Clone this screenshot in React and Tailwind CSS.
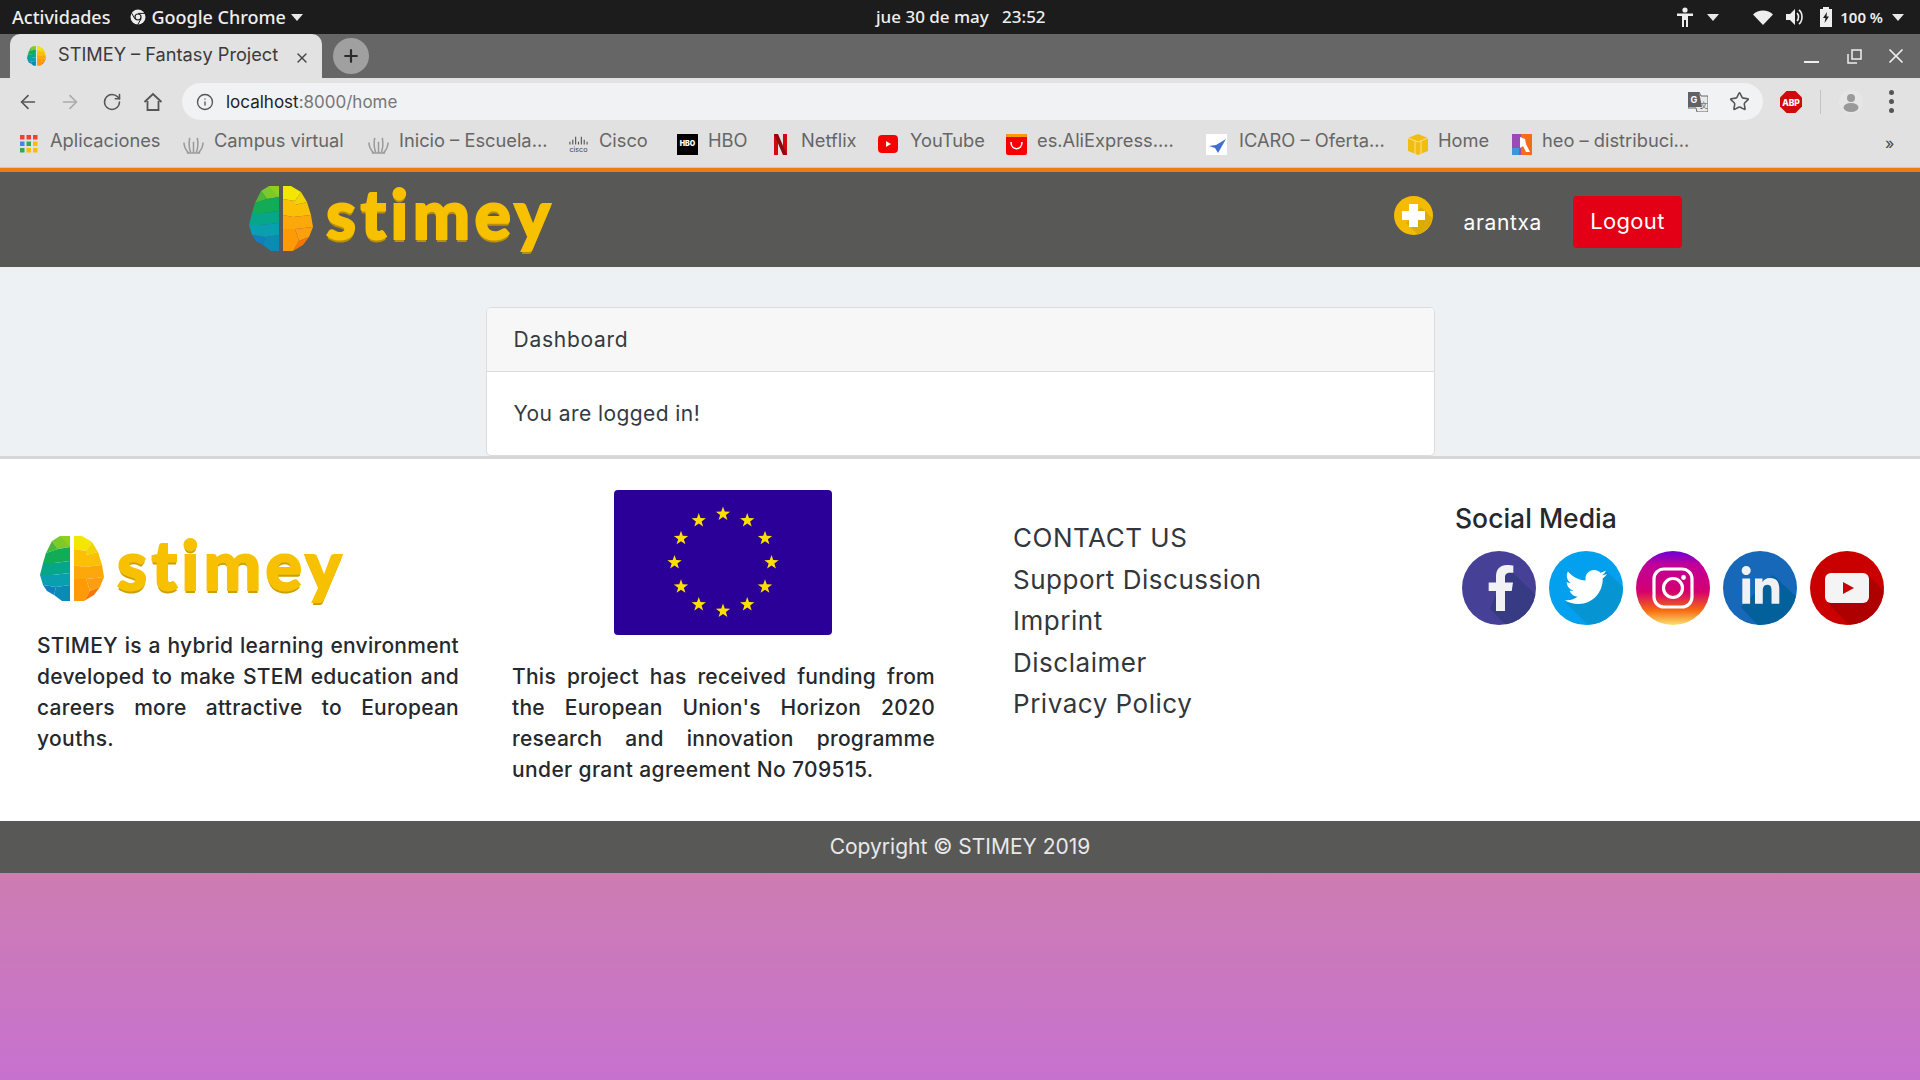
import { ArrowLeft, ArrowRight, RotateCw, Star, X, Plus, Info } from "lucide-react";
import { FaFacebookF, FaTwitter, FaLinkedinIn } from "react-icons/fa";

// low poly brain logo, used in the header and the footer
const Brain = ({ className }) => (
  <svg viewBox="0 0 64 67" className={className}>
    <polygon points="12,6 20,1 30,1 30,12 18,14" fill="#7cc92a" />
    <polygon points="20,1 30,1 30,12" fill="#8fd01a" />
    <polygon points="12,6 18,14 6,18" fill="#4cb83a" />
    <polygon points="6,18 18,14 30,12 30,26 14,28 3,28" fill="#12ac57" />
    <polygon points="3,28 14,28 30,26 30,38 12,40 0,40" fill="#07a58a" />
    <polygon points="0,40 12,40 30,38 30,50 16,52 3,50" fill="#0a9fb0" />
    <polygon points="3,50 16,52 14,60 7,56" fill="#0f80bf" />
    <polygon points="16,52 30,50 30,66 22,66 14,60" fill="#0a8ab5" />
    <polygon points="34,1 42,1 52,7 46,16 34,14" fill="#f5e600" />
    <polygon points="52,7 58,17 46,20 46,16" fill="#f2d500" />
    <polygon points="34,14 46,16 46,20 58,17 62,30 44,32 34,30" fill="#fbbf06" />
    <polygon points="34,30 44,32 62,30 64,42 46,44 34,44" fill="#fca70a" />
    <polygon points="34,44 46,44 50,56 44,66 34,66" fill="#fd9a05" />
    <polygon points="46,44 64,42 60,52 50,56" fill="#fb9f10" />
    <polygon points="50,56 60,52 54,60 44,66" fill="#f97606" />
  </svg>
);

const Logo = ({ text }) => (
  <div className="flex items-center">
    <Brain className="w-[64px] h-[67px]" />
    <span className={text}>stimey</span>
  </div>
);

const Favicon = {
  apps: (
    <svg viewBox="0 0 18 18" className="w-[18px] h-[18px]">
      {["#ea4335", "#ea4335", "#ea4335", "#4285f4", "#34a853", "#fbbc04", "#34a853", "#fbbc04", "#fbbc04"].map((c, i) => (
        <rect key={i} x={(i % 3) * 6.5} y={Math.floor(i / 3) * 6.5} width="4.5" height="4.5" fill={c} />
      ))}
    </svg>
  ),
  wings: (
    <svg viewBox="0 0 22 22" className="w-[21px] h-[21px]" fill="none" stroke="#9a9a9a" strokeWidth="1.6">
      <path d="M11 20V8M8 19C6 14 6 10 7 4M14 19c2-5 2-9 1-15M6 20C3 17 1 14 1 9M16 20c3-3 5-6 5-11M4 20h14" />
    </svg>
  ),
  cisco: (
    <svg viewBox="0 0 22 22" className="w-[21px] h-[21px]">
      <path d="M2 8v3M5 6v5M8 3v8M11 8v3M14 3v8M17 6v5M20 8v3" stroke="#555" strokeWidth="1.2" />
      <text x="11" y="19" textAnchor="middle" fontSize="7.5" fontFamily="Inter, sans-serif" fill="#444">cisco</text>
    </svg>
  ),
  hbo: (
    <div className="w-[21px] h-[21px] bg-black flex items-center justify-center text-white text-[7px] font-black font-['Inter',sans-serif]">HBO</div>
  ),
  netflix: (
    <svg viewBox="0 0 13 21" className="w-[13px] h-[21px]">
      <path d="M0 0h4v21H0zM9 0h4v21H9z" fill="#d00a12" />
      <path d="M0 0h4l9 21H9z" fill="#8f0a0f" />
    </svg>
  ),
  youtube: (
    <svg viewBox="0 0 20 18" className="w-[20px] h-[18px]">
      <rect width="20" height="18" rx="4" fill="#f70000" />
      <path d="M8 6l5 3-5 3z" fill="#fff" />
    </svg>
  ),
  ali: (
    <svg viewBox="0 0 21 21" className="w-[21px] h-[21px]">
      <rect width="21" height="21" rx="2" fill="#f70000" />
      <path d="M0 2a2 2 0 0 1 2-2h17a2 2 0 0 1 2 2v1H0z" fill="#ff9a00" />
      <path d="M5 8c0 9 11 9 11 0" fill="none" stroke="#fff" strokeWidth="1.6" />
    </svg>
  ),
  icaro: (
    <svg viewBox="0 0 21 21" className="w-[21px] h-[21px]">
      <rect width="21" height="21" fill="#fff" />
      <path d="M20 5L12 19l-3-5-6-2 7-1z" fill="#3f6fd1" />
    </svg>
  ),
  home: (
    <svg viewBox="0 0 20 21" className="w-[20px] h-[21px]">
      <path d="M10 0l10 4v13l-10 4L0 17V4z" fill="#f2bd12" />
      <path d="M0 4l10 4 10-4M7 7v13M13 7v13" fill="none" stroke="#fce08a" strokeWidth="1" />
    </svg>
  ),
  heo: (
    <svg viewBox="0 0 20 21" className="w-[20px] h-[21px]">
      <rect width="20" height="21" fill="#f56b1d" />
      <path d="M0 0h9v21H0z" fill="#9a4bb5" />
      <path d="M0 14h7v7H0z" fill="#3c97d8" />
      <path d="M8 3l5 2 1 5 4 8h-4l-3-6-3 2z" fill="#fff" />
    </svg>
  ),
};

const bookmarks = [
  { icon: "apps", label: "Aplicaciones", cls: "w-[163px] gap-3" },
  { icon: "wings", label: "Campus virtual", cls: "w-[185px] gap-2.5" },
  { icon: "wings", label: "Inicio – Escuela...", cls: "w-[200px] gap-2.5" },
  { icon: "cisco", label: "Cisco", cls: "w-[109px] gap-2.5" },
  { icon: "hbo", label: "HBO", cls: "w-[97px] gap-2.5" },
  { icon: "netflix", label: "Netflix", cls: "w-[104px] gap-3.5" },
  { icon: "youtube", label: "YouTube", cls: "w-[128px] gap-3" },
  { icon: "ali", label: "es.AliExpress....", cls: "w-[200px] gap-2.5" },
  { icon: "icaro", label: "ICARO – Oferta...", cls: "w-[202px] gap-3" },
  { icon: "home", label: "Home", cls: "w-[104px] gap-2.5" },
  { icon: "heo", label: "heo – distribuci...", cls: "w-[200px] gap-2.5" },
];

const Caret = ({ className }) => (
  <svg viewBox="0 0 12 7" className={`w-[12px] h-[7px] ${className || ""}`}>
    <path d="M0 0h12L6 7z" fill="#e8e8e8" />
  </svg>
);

const TopBar = () => (
  <div className="h-[34px] bg-[#1c1c1c] flex items-center text-[#eeeeee] text-[18px] font-medium font-['Noto_Sans',sans-serif] relative">
    <span className="ml-[12px]">Actividades</span>
    <svg viewBox="0 0 16 16" className="w-[16px] h-[16px] ml-[20px]">
      <circle cx="8" cy="8" r="7.5" fill="#eee" />
      <circle cx="8" cy="8" r="3.6" fill="#1c1c1c" />
      <circle cx="8" cy="8" r="2.4" fill="#eee" />
      <path d="M8 4.400h7M4.900 9.800L1.400 3.800M11.100 9.800l-3.500 6" stroke="#1c1c1c" strokeWidth="1" />
    </svg>
    <span className="ml-[5px]">Google Chrome</span>
    <Caret className="ml-[5px]" />
    <span className="absolute left-[876px] text-[17px] whitespace-pre">jue 30 de may   23:52</span>
    <div className="ml-auto flex items-center">
      <svg viewBox="0 0 16 20" className="w-[16px] h-[20px] fill-[#eee]">
        <circle cx="8" cy="3" r="2.6" />
        <path d="M0 6.5h16V9h-5v11H9v-7H7v7H5V9H0z" />
      </svg>
      <Caret className="ml-[14px]" />
      <svg viewBox="0 0 20 15" className="w-[20px] h-[15px] ml-[34px]">
        <path d="M0 4.5C5-1 15-1 20 4.5L10 15z" fill="#eee" />
      </svg>
      <svg viewBox="0 0 18 18" className="w-[18px] h-[18px] ml-[13px]" fill="#eee">
        <path d="M0 6h4l5-5v16l-5-5H0z" />
        <path d="M11 5c2 2 2 6 0 8M13 2c4 3 4 11 0 14" fill="none" stroke="#eee" strokeWidth="1.6" />
      </svg>
      <svg viewBox="0 0 12 20" className="w-[12px] h-[20px] ml-[16px]">
        <path d="M3 0h6v2h3v18H0V2h3z" fill="#eee" />
        <path d="M7 5L3 11h2.5L4.5 16 9 9.500H6.500z" fill="#1c1c1c" />
      </svg>
      <span className="ml-[8px] text-[15px] font-semibold">100 %</span>
      <Caret className="ml-[9px] mr-[16px]" />
    </div>
  </div>
);

const TabStrip = () => (
  <div className="h-[44px] bg-[#666666] flex items-end relative">
    <div className="ml-[10px] w-[312px] h-[44px] bg-[#e2e2e2] rounded-t-[10px] flex items-center text-[#3a3a3a] text-[18.2px] font-['Inter',sans-serif]">
      <Brain className="ml-[17px] w-[19px] h-[20px]" />
      <span className="ml-[12px] -mt-[2px]">STIMEY – Fantasy Project</span>
      <X size={16} strokeWidth={2} className="ml-auto mr-[12px] mt-[4px] text-[#444]" />
    </div>
    <div className="ml-[11px] mb-[4px] w-[36px] h-[36px] rounded-full bg-[#a0a0a0] flex items-center justify-center">
      <Plus size={20} strokeWidth={2.6} className="text-[#2b2b2b]" />
    </div>
    <div className="ml-auto flex items-center self-center text-[#eeeeee] mr-[12px]">
      <div className="w-[15px] h-[2px] bg-[#eeeeee] mt-[12px] mr-[2px]" />
      <svg viewBox="0 0 15 15" className="w-[15px] h-[15px] ml-[26px] mr-[1px]" fill="none" stroke="#eee" strokeWidth="1.5">
        <path d="M5 1h9v9H5zM1 5v9h9" />
      </svg>
      <X size={24} strokeWidth={1.7} className="ml-[21px]" />
    </div>
  </div>
);

const Toolbar = () => (
  <div className="h-[42px] bg-[#e2e2e2] flex items-center pt-[5px] text-[#555]">
    <ArrowLeft size={22} strokeWidth={1.8} className="ml-[17px] text-[#555]" />
    <ArrowRight size={22} strokeWidth={1.8} className="ml-[20px] text-[#aaa]" />
    <RotateCw size={20} strokeWidth={1.9} className="ml-[21px] text-[#555]" />
    <svg viewBox="0 0 20 20" className="w-[20px] h-[20px] ml-[21px]" fill="none" stroke="#555" strokeWidth="1.8">
      <path d="M1.500 10L10 2l8.500 8M4.500 9v9h11V9" />
    </svg>
    <div className="ml-[19px] w-[1581px] h-[37px] rounded-full bg-[#f1f2f4] flex items-center">
      <Info size={18} strokeWidth={1.8} className="ml-[14px] text-[#555]" />
      <span className="ml-[12px] mt-[2px] text-[17px] text-[#222] font-['Inter',sans-serif]">
        localhost<span className="text-[#777]">:8000/home</span>
      </span>
      <div className="ml-auto flex items-center mr-[13px]">
        <svg viewBox="0 0 20 20" className="w-[20px] h-[20px]">
          <path d="M0 0h11l2 4h7v16H9l-1-4H0z" fill="#e9e9ea" stroke="#666" strokeWidth="1" />
          <path d="M0 0h11l3 15H0z" fill="#5f6368" />
          <text x="2.500" y="11" fontSize="9" fontWeight="700" fill="#fff" fontFamily="Inter, sans-serif">G</text>
          <text x="11.500" y="16" fontSize="8" fill="#555" fontFamily="Inter, sans-serif">文</text>
        </svg>
        <Star size={21} strokeWidth={1.8} className="ml-[21px] text-[#555]" />
      </div>
    </div>
    <svg viewBox="0 0 22 22" className="w-[22px] h-[22px] ml-[17px]">
      <path d="M6.500 0h9L22 6.500v9L15.500 22h-9L0 15.500v-9z" fill="#cf0a0a" />
      <text x="11" y="14.500" textAnchor="middle" fontSize="8.500" fontWeight="800" fill="#fff" fontFamily="Inter, sans-serif">ABP</text>
    </svg>
    <div className="ml-[18px] w-px h-[24px] bg-[#c4c4c4]" />
    <svg viewBox="0 0 24 24" className="w-[24px] h-[24px] ml-[18px]">
      <circle cx="12" cy="12" r="12" fill="#e6e6e6" />
      <circle cx="12" cy="8" r="4" fill="#9a9a9a" />
      <ellipse cx="12" cy="17.500" rx="7.500" ry="4.500" fill="#9a9a9a" />
    </svg>
    <div className="ml-[26px] flex flex-col gap-[4px]">
      <span className="w-[5px] h-[5px] rounded-full bg-[#555]" />
      <span className="w-[5px] h-[5px] rounded-full bg-[#555]" />
      <span className="w-[5px] h-[5px] rounded-full bg-[#555]" />
    </div>
  </div>
);

const Bookmarks = () => (
  <div className="h-[48px] bg-[#e1e1e1] flex items-center pl-[20px] border-b border-[#c8c8c8] pb-[5px] text-[18.300px] text-[#666666] font-['Inter',sans-serif]">
    {bookmarks.map((b) => (
      <div key={b.label} className={`flex items-center shrink-0 whitespace-nowrap ${b.cls}`}>
        <span className="mt-[6px] flex">{Favicon[b.icon]}</span>
        <span>{b.label}</span>
      </div>
    ))}
    <span className="ml-[173px] mt-[3px] text-[16px] text-[#444]">»</span>
  </div>
);

const Header = () => (
  <div className="h-[99px] border-t-4 border-[#f07a10] bg-[#585857] flex items-center font-['Inter',sans-serif]">
    <div className="ml-[249px] -mt-[3px]">
      <Logo text="ml-[13px] text-[#f7c100] text-[68px] leading-none -mt-[10px] font-black tracking-[0.065em] font-['Lato',sans-serif] [-webkit-text-stroke:2px_#f7c100] [text-shadow:0_3px_0_#b98f06]" />
    </div>
    <div className="ml-auto flex items-start mr-[238px] mt-[4px]">
      <svg viewBox="0 0 39 39" className="w-[39px] h-[39px]">
        <circle cx="19.500" cy="19.500" r="19.500" fill="#f5bb00" />
        <path d="M19.500 19.500L27 11 38 22A19.500 19.500 0 0 1 24 38.500L12 27z" fill="#dcab08" />
        <path d="M15 8h9v7h7v9h-7v7h-9v-7H8v-9h7z" fill="#fff" />
      </svg>
      <span className="ml-[31px] mt-[11px] text-white text-[21px] tracking-[0.03em]">arantxa</span>
      <button className="ml-[31px] w-[109px] h-[52px] rounded-[4px] bg-[#e30016] text-white text-[22px] tracking-[0.015em]">Logout</button>
    </div>
  </div>
);

const Dashboard = () => (
  <div className="h-[192px] bg-[#eef1f4] border-b-[3px] border-[#d6d6d6] flex justify-center pt-[40px] font-['Inter',sans-serif] text-[#343a40] text-[21px]">
    <div className="w-[949px] h-[149px] bg-white rounded-[5px] border border-[#dcdcdc] overflow-hidden">
      <div className="h-[64px] bg-[#f7f7f7] border-b border-[#dcdcdc] flex items-center pl-[27px] tracking-[0.035em]">Dashboard</div>
      <div className="h-[84px] flex items-center pl-[27px] tracking-[0.02em]">You are logged in!</div>
    </div>
  </div>
);

const Justified = ({ lines }) => (
  <div className="text-[21px] leading-[31px] font-medium text-[#25282c] tracking-[0.012em]">
    {lines.map((l, i) => (
      <div key={i} className={i < lines.length - 1 ? "text-justify [text-align-last:justify] whitespace-nowrap" : "whitespace-nowrap tracking-[0.018em]"}>
        {l}
      </div>
    ))}
  </div>
);

const stars = Array.from({ length: 12 }).map((_, i) => {
  const a = (i * Math.PI) / 6;
  return [109 + 48.500 * Math.sin(a), 72.500 - 48.500 * Math.cos(a)];
});

const starPoints = (cx, cy, r) =>
  Array.from({ length: 10 })
    .map((_, i) => {
      const rad = i % 2 === 0 ? r : r * 0.4;
      const a = (i * Math.PI) / 5;
      return `${cx + rad * Math.sin(a)},${cy - rad * Math.cos(a)}`;
    })
    .join(" ");

const Flag = () => (
  <svg viewBox="0 0 218 145" className="w-[218px] h-[145px] rounded-[4px] block bg-[#2a0098]">
    {stars.map(([x, y], i) => (
      <polygon key={i} points={starPoints(x, y, 7.500)} fill="#ffdf00" />
    ))}
  </svg>
);

// round social buttons with the flat long shadow running to the lower right
const Social = ({ bg, shade, shadow, children }) => (
  <svg viewBox="0 0 74 74" className="w-[74px] h-[74px] shrink-0">
    <defs>
      <clipPath id="social-circle">
        <circle cx="37" cy="37" r="37" />
      </clipPath>
    </defs>
    <circle cx="37" cy="37" r="37" fill={bg} />
    {shade && <polygon points={shadow} fill={shade} clipPath="url(#social-circle)" />}
    {children}
  </svg>
);

const SocialIcons = () => (
  <div className="flex gap-[13px] ml-[7px] mt-[15px]">
    <Social bg="#464196" shade="#373b84" shadow="45,16 80,50 80,80 50,80 28,58">
      <FaFacebookF x="16" y="14" size="46" color="#f2f2f4" />
    </Social>
    <Social bg="#03a0f0" shade="#0794d2" shadow="55,18 80,42 80,80 45,80 17,52">
      <FaTwitter x="16" y="15" size="42" color="#ffffff" />
    </Social>
    <svg viewBox="0 0 74 74" className="w-[74px] h-[74px] shrink-0">
      <defs>
        <linearGradient id="insta-bg" x1="0" y1="0" x2="0" y2="1">
          <stop offset="0" stopColor="#6a00d8" />
          <stop offset="0.18" stopColor="#c0009a" />
          <stop offset="0.55" stopColor="#d40070" />
          <stop offset="0.8" stopColor="#f56a10" />
          <stop offset="1" stopColor="#fbe070" />
        </linearGradient>
      </defs>
      <circle cx="37" cy="37" r="37" fill="url(#insta-bg)" />
      <rect x="18" y="18" width="38" height="38" rx="10" fill="none" stroke="#fff" strokeWidth="3.200" />
      <circle cx="37" cy="37" r="9.500" fill="none" stroke="#fff" strokeWidth="3.200" />
      <circle cx="47.500" cy="26.500" r="2.400" fill="#fff" />
    </svg>
    <Social bg="#1768b8" shade="#02609b" shadow="50,24 80,52 80,80 40,80 18,56">
      <FaLinkedinIn x="16" y="15" size="43" color="#f0f1f3" />
    </Social>
    <Social bg="#ca0000" shade="#ae0000" shadow="58,24 80,46 80,80 45,80 16,50">
      <path d="M21 22h32a6 6 0 0 1 6 6v18a6 6 0 0 1-6 6H21a6 6 0 0 1-6-6V28a6 6 0 0 1 6-6z" fill="#f4f4f4" />
      <path d="M33 31l11 6-11 6z" fill="#ca0000" />
    </Social>
  </div>
);

const links = ["CONTACT US", "Support Discussion", "Imprint", "Disclaimer", "Privacy Policy"];

const Footer = () => (
  <div className="h-[362px] bg-white flex font-['Inter',sans-serif] text-[#25282c]">
    <div className="ml-[37px] w-[422px] pt-[76px]">
      <div className="ml-[3px]">
        <Logo text="ml-[13px] text-[#f7c100] text-[68px] leading-none -mt-[10px] font-black tracking-[0.065em] font-['Lato',sans-serif] [-webkit-text-stroke:2px_#f7c100] [text-shadow:0_3px_0_#c9a00c]" />
      </div>
      <div className="mt-[28px]">
        <Justified lines={["STIMEY is a hybrid learning environment", "developed to make STEM education and", "careers more attractive to European", "youths."]} />
      </div>
    </div>
    <div className="ml-[53px] w-[423px] pt-[31px]">
      <div className="flex justify-center pr-[2px]">
        <Flag />
      </div>
      <div className="mt-[26px]">
        <Justified lines={["This project has received funding from", "the European Union's Horizon 2020", "research and innovation programme", "under grant agreement No 709515."]} />
      </div>
    </div>
    <div className="ml-[78px] w-[442px] pt-[58px] text-[26px] leading-[41.500px] text-[#33373b] tracking-[0.02em]">
      {links.map((l) => (
        <div key={l}>{l}</div>
      ))}
    </div>
    <div className="pt-[41px]">
      <div className="text-[26.500px] leading-[36px] font-medium">Social Media</div>
      <SocialIcons />
    </div>
  </div>
);

export default function App() {
  return (
    <div className="w-[1920px] h-[1080px] overflow-hidden flex flex-col">
      <TopBar />
      <TabStrip />
      <Toolbar />
      <Bookmarks />
      <Header />
      <Dashboard />
      <Footer />
      <div className="h-[52px] bg-[#585857] flex items-center justify-center text-[#e9e9e9] text-[21px] font-['Inter',sans-serif]">
        Copyright © STIMEY 2019
      </div>
      <div className="flex-1 bg-gradient-to-b from-[#cd7db1] to-[#c771cf]" />
    </div>
  );
}
